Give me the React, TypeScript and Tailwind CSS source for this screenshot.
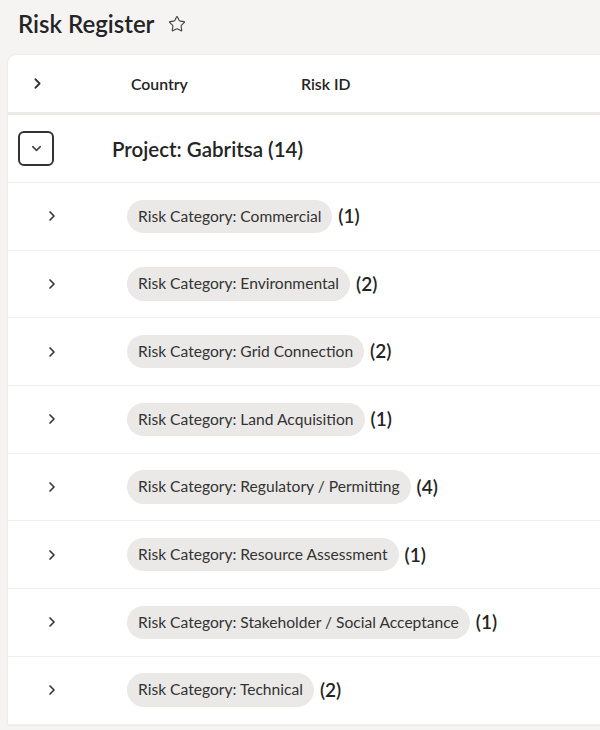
import { ChevronRight, ChevronDown, Star } from "lucide-react";

const categories = [
  { name: "Commercial", count: 1 },
  { name: "Environmental", count: 2 },
  { name: "Grid Connection", count: 2 },
  { name: "Land Acquisition", count: 1 },
  { name: "Regulatory / Permitting", count: 4 },
  { name: "Resource Assessment", count: 1 },
  { name: "Stakeholder / Social Acceptance", count: 1 },
  { name: "Technical", count: 2 },
];

export default function App() {
  return (
    <div className="h-[730px] w-[600px] overflow-hidden bg-[#f5f4f3] font-['Segoe_UI','Lato',sans-serif] text-[#242424]">
      <div className="flex h-[55px] items-center gap-[14px] pl-[18px] pb-[8px]">
        <h1 className="text-[24px] font-semibold leading-none">Risk Register</h1>
        <Star className="h-[18px] w-[18px] text-[#444]" strokeWidth={1.5} />
      </div>

      <div className="ml-[8px] rounded-tl-[8px] bg-white shadow-[0_0_2px_rgba(0,0,0,0.12)]">
        <div className="flex h-[60px] items-center border-b-[3px] border-[#ece9e9] text-[15.8px]">
          <div className="flex w-[123px] pl-[21px]">
            <ChevronRight className="h-[17px] w-[17px] text-[#333]" strokeWidth={2.5} />
          </div>
          <div className="w-[170px] font-semibold">Country</div>
          <div className="font-semibold">Risk ID</div>
        </div>

        <div className="flex h-[68px] items-center border-b border-[#f0efee]">
          <div className="w-[104px] pl-[10px]">
            <div className="flex h-[35px] w-[36px] items-center justify-center rounded-[6px] border-2 border-[#333]">
              <ChevronDown className="h-[15px] w-[15px] text-[#444]" strokeWidth={2.5} />
            </div>
          </div>
          <div className="pt-[2px] text-[20.5px] font-semibold">Project: Gabritsa (14)</div>
        </div>

        {categories.map((c) => (
          <div key={c.name} className="flex h-[67.7px] items-center border-b border-[#f0efee]">
            <div className="flex w-[119px] pl-[36px]">
              <ChevronRight className="h-[16px] w-[16px] text-[#333]" strokeWidth={2.5} />
            </div>
            <span className="rounded-full bg-[#ebe9e7] px-[11px] py-[5px] text-[15.6px] text-[#333]">
              Risk Category: {c.name}
            </span>
            <span className="ml-[6px] text-[19px] font-semibold">({c.count})</span>
          </div>
        ))}
      </div>
    </div>
  );
}
